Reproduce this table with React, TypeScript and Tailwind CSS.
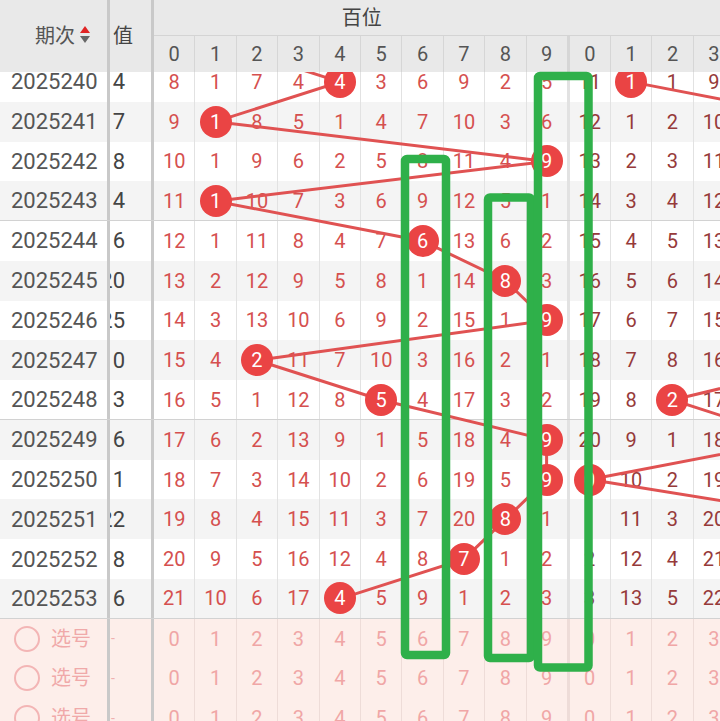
import React from 'react';

const hundreds = [
  [8, 1, 7, 4, 4, 3, 6, 9, 2, 5],
  [9, 1, 8, 5, 1, 4, 7, 10, 3, 6],
  [10, 1, 9, 6, 2, 5, 8, 11, 4, 9],
  [11, 1, 10, 7, 3, 6, 9, 12, 5, 1],
  [12, 1, 11, 8, 4, 7, 6, 13, 6, 2],
  [13, 2, 12, 9, 5, 8, 1, 14, 8, 3],
  [14, 3, 13, 10, 6, 9, 2, 15, 1, 9],
  [15, 4, 2, 11, 7, 10, 3, 16, 2, 1],
  [16, 5, 1, 12, 8, 5, 4, 17, 3, 2],
  [17, 6, 2, 13, 9, 1, 5, 18, 4, 9],
  [18, 7, 3, 14, 10, 2, 6, 19, 5, 9],
  [19, 8, 4, 15, 11, 3, 7, 20, 8, 1],
  [20, 9, 5, 16, 12, 4, 8, 7, 1, 2],
  [21, 10, 6, 17, 4, 5, 9, 1, 2, 3],
];
const hitHundreds = [4, 1, 9, 1, 6, 8, 9, 2, 5, 9, 9, 8, 7, 4];

const tens = [
  [11, 1, 1, 9],
  [12, 1, 2, 10],
  [13, 2, 3, 11],
  [14, 3, 4, 12],
  [15, 4, 5, 13],
  [16, 5, 6, 14],
  [17, 6, 7, 15],
  [18, 7, 8, 16],
  [19, 8, 2, 17],
  [20, 9, 1, 18],
  [0, 10, 2, 19],
  [1, 11, 3, 20],
  [2, 12, 4, 21],
  [3, 13, 5, 22],
];
const hitTens: Record<number, number> = { 0: 1, 8: 2, 10: 0 };

const values = ['4', '7', '8', '4', '6', '20', '25', '0', '3', '6', '1', '22', '8', '6'];
const digits = [0, 1, 2, 3, 4, 5, 6, 7, 8, 9];

// centres used by the trend lines (body coordinates)
const colX1 = (i: number) => (i < 9 ? 154 + 41.4 * i + 20.2 : 546.6);
const colX2 = (j: number) => 569.6 + 41.4 * j + 20.2;
const rowY = (r: number) => 9.885 + 39.77 * r;

function Ball({ n }: { n: number }) {
  return (
    <span className="relative z-10 flex h-8 w-8 items-center justify-center rounded-full bg-[#ea4444] text-[20px] text-white">
      {n}
    </span>
  );
}

function SortIcon() {
  return (
    <svg width="10" height="20" viewBox="0 0 10 20" className="ml-[5px]">
      <path d="M5 0 L10 7 L0 7 Z" fill="#e02424" />
      <path d="M0 10 L10 10 L5 17 Z" fill="#666" />
    </svg>
  );
}

function Cell({ last, children, className }: { last?: boolean; children: React.ReactNode; className: string }) {
  return (
    <div
      className={
        last
          ? `flex h-full w-[43px] shrink-0 items-center justify-center border-r-[3px] border-[#c9c9c9] ${className}`
          : `flex h-full w-[41.4px] shrink-0 items-center justify-center border-r ${className}`
      }
    >
      {children}
    </div>
  );
}

export default function App() {
  const pts1 = [[colX1(1), rowY(-1)], ...hitHundreds.map((c, r) => [colX1(c), rowY(r)])];
  const pts2a = [[colX2(1), rowY(0)], [colX2(6), rowY(1)]];
  const pts2b = [
    [colX2(6), rowY(7)],
    [colX2(2), rowY(8)],
    [colX2(5), rowY(9)],
    [colX2(0), rowY(10)],
    [colX2(6), rowY(11)],
  ];
  const toStr = (p: number[][]) => p.map(([x, y]) => `${x},${y}`).join(' ');

  return (
    <div className="relative flex h-[721px] w-[720px] flex-col overflow-hidden bg-white font-['Roboto','Noto_Sans_CJK_SC',sans-serif]">
      {/* header */}
      <div className="flex h-[72px] shrink-0 bg-[#e9e9e9]">
        <div className="flex w-[110px] shrink-0 items-center justify-end border-r-[3px] border-[#c9c9c9] pr-[17px]">
          <span className="text-[20px] text-[#555]">期次</span>
          <SortIcon />
        </div>
        <div className="flex w-[44px] shrink-0 items-center border-r-[3px] border-[#c9c9c9] pl-[3px] text-[20px] text-[#444]">
          值
        </div>
        <div className="flex w-[415.6px] shrink-0 flex-col">
          <div className="flex h-9 items-center justify-center border-b border-[#d4d4d4] text-[20px] text-[#444]">百位</div>
          <div className="flex flex-1">
            {digits.map((d) => (
              <Cell key={d} last={d === 9} className="border-[#d6d6d6] text-[20px] text-[#555]">
                {d}
              </Cell>
            ))}
          </div>
        </div>
        <div className="flex w-[416px] shrink-0 flex-col">
          <div className="flex h-9 items-center justify-center border-b border-[#d4d4d4] text-[20px] text-[#444]">十位</div>
          <div className="flex flex-1">
            {digits.map((d) => (
              <Cell key={d} className="border-[#d6d6d6] text-[20px] text-[#555]">
                {d}
              </Cell>
            ))}
          </div>
        </div>
      </div>

      {/* body */}
      <div className="relative flex-1 overflow-hidden">
        <div className="-mt-[10px]">
          {hundreds.map((row, r) => (
            <div
              key={r}
              className={`flex h-[39.77px] ${r % 2 ? 'bg-[#f4f4f4]' : 'bg-white'} ${
                r === 3 || r === 8 || r === 13 ? 'border-b border-[#d2d2d2]' : ''
              }`}
            >
              <div className="flex w-[110px] shrink-0 items-center border-r-[3px] border-[#c9c9c9] pl-[11px] text-[22px] text-[#555]">
                {2025240 + r}
              </div>
              <div className="flex w-[44px] shrink-0 items-center justify-end overflow-hidden border-r-[3px] border-[#c9c9c9] pr-[26px] text-[22px] text-[#444]">
                {values[r]}
              </div>
              {row.map((v, i) => (
                <Cell key={i} last={i === 9} className="border-[#e2e2e2] text-[20px] text-[#d5504f]">
                  {hitHundreds[r] === i ? <Ball n={i} /> : v}
                </Cell>
              ))}
              {tens[r].map((v, j) => (
                <Cell key={j} className="border-[#e2e2e2] text-[20px] text-[#963a3a]">
                  {hitTens[r] === j ? <Ball n={j} /> : v}
                </Cell>
              ))}
            </div>
          ))}

          {[0, 1, 2].map((k) => (
            <div key={k} className="flex h-[39.77px] bg-[#fdeeea]">
              <div className="flex w-[110px] shrink-0 items-center border-r-[3px] border-[#c9c9c9] pl-[14px]">
                <span className="h-[26px] w-[26px] rounded-full border-2 border-[#f3b5b5]" />
                <span className="ml-[11px] text-[20px] text-[#f0a9a9]">选号</span>
              </div>
              <div className="flex w-[44px] shrink-0 items-center border-r-[3px] border-[#c9c9c9] pl-[1px] text-[14px] text-[#f0b0b0]">
                -
              </div>
              {digits.map((d) => (
                <Cell key={d} last={d === 9} className="border-[#eedcd8] text-[20px] text-[#f0a6a6]">
                  {d}
                </Cell>
              ))}
              {digits.slice(0, 4).map((d) => (
                <Cell key={d} className="border-[#eedcd8] text-[20px] text-[#f0a6a6]">
                  {d}
                </Cell>
              ))}
            </div>
          ))}
        </div>

        <svg className="pointer-events-none absolute inset-0 z-[5]" width="720" height="649">
          <polyline points={toStr(pts1)} fill="none" stroke="#e05252" strokeWidth="3" />
          <polyline points={toStr(pts2a)} fill="none" stroke="#e05252" strokeWidth="3" />
          <polyline points={toStr(pts2b)} fill="none" stroke="#e05252" strokeWidth="3" />
        </svg>
      </div>

      {/* highlight frames */}
      <svg className="pointer-events-none absolute left-0 top-0 z-20" width="720" height="721">
        <g fill="none" stroke="#2fb04a" strokeWidth="8.5" strokeLinejoin="round">
          <rect x="405" y="159" width="41" height="496" rx="2" />
          <rect x="488" y="197.5" width="43" height="460.5" rx="2" />
          <rect x="538" y="76" width="50.5" height="591.5" rx="2" />
        </g>
      </svg>
    </div>
  );
}
